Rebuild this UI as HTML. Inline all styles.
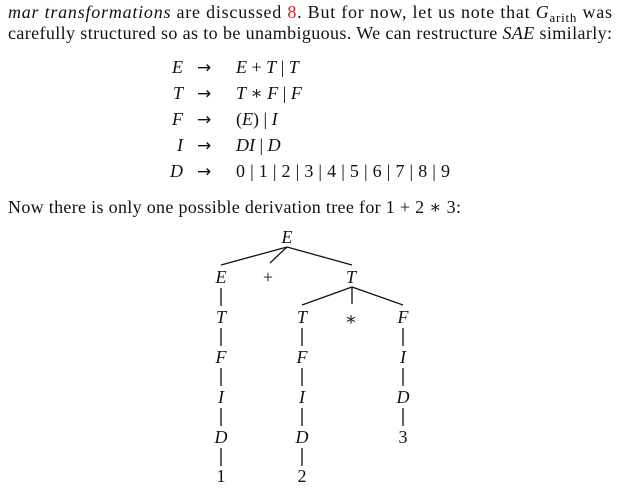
<!DOCTYPE html>
<html><head><meta charset="utf-8"><style>
html,body{margin:0;padding:0;background:#fff;}
svg{display:block;}
text{font-family:"Liberation Serif","DejaVu Serif",serif;font-size:18px;fill:#111;}
.i{font-style:italic;}
.r{fill:#e0191a;}
.a{font-family:"DejaVu Sans",sans-serif;font-size:17px;}
line{stroke:#111;stroke-width:1.3;}
</style></head><body>
<svg width="619" height="494" xmlns="http://www.w3.org/2000/svg">
<text x="8" y="18" textLength="604" lengthAdjust="spacing"><tspan class="i">mar transformations</tspan> are discussed <tspan class="r">8</tspan>. But for now, let us note that <tspan class="i">G</tspan><tspan font-size="13" dy="4">arith</tspan><tspan dy="-4"> was</tspan></text>
<text x="8" y="39" textLength="604" lengthAdjust="spacing">carefully structured so as to be unambiguous. We can restructure <tspan class="i">SAE</tspan> similarly:</text>

<g>
<text x="183" y="73" text-anchor="end" class="i">E</text><text x="197" y="73" class="a">→</text><text x="236" y="73"><tspan class="i">E</tspan> + <tspan class="i">T</tspan>  |  <tspan class="i">T</tspan></text>
<text x="183" y="99" text-anchor="end" class="i">T</text><text x="197" y="99" class="a">→</text><text x="236" y="99"><tspan class="i">T</tspan> ∗ <tspan class="i">F</tspan>  |  <tspan class="i">F</tspan></text>
<text x="183" y="125" text-anchor="end" class="i">F</text><text x="197" y="125" class="a">→</text><text x="236" y="125">(<tspan class="i">E</tspan>)  |  <tspan class="i">I</tspan></text>
<text x="183" y="151" text-anchor="end" class="i">I</text><text x="197" y="151" class="a">→</text><text x="236" y="151"><tspan class="i">DI</tspan> | <tspan class="i">D</tspan></text>
<text x="183" y="177" text-anchor="end" class="i">D</text><text x="197" y="177" class="a">→</text><text x="236" y="177" textLength="214" lengthAdjust="spacing">0 | 1 | 2 | 3 | 4 | 5 | 6 | 7 | 8 | 9</text>
</g>

<text x="8" y="213" textLength="453" lengthAdjust="spacing">Now there is only one possible derivation tree for 1 + 2 ∗ 3:</text>

<g text-anchor="middle">
<text x="287" y="243" class="i">E</text>
<text x="221" y="283" class="i">E</text><text x="268" y="283">+</text><text x="351" y="283" class="i">T</text>
<text x="221" y="323" class="i">T</text><text x="302" y="323" class="i">T</text><text x="351" y="325">∗</text><text x="403" y="323" class="i">F</text>
<text x="221" y="363" class="i">F</text><text x="302" y="363" class="i">F</text><text x="403" y="363" class="i">I</text>
<text x="221" y="403" class="i">I</text><text x="302" y="403" class="i">I</text><text x="403" y="403" class="i">D</text>
<text x="221" y="443" class="i">D</text><text x="302" y="443" class="i">D</text><text x="403" y="443">3</text>
<text x="221" y="482">1</text><text x="302" y="482">2</text>
</g>
<g>
<line x1="287" y1="247" x2="221" y2="265"/>
<line x1="287" y1="247" x2="270" y2="263"/>
<line x1="287" y1="247" x2="352" y2="265"/>
<line x1="352" y1="287" x2="302" y2="305"/>
<line x1="352" y1="287" x2="352" y2="304"/>
<line x1="352" y1="287" x2="403" y2="305"/>
<line x1="221" y1="288" x2="221" y2="306"/>
<line x1="221" y1="328" x2="221" y2="346"/>
<line x1="221" y1="368" x2="221" y2="386"/>
<line x1="221" y1="408" x2="221" y2="426"/>
<line x1="221" y1="448" x2="221" y2="466"/>
<line x1="302" y1="328" x2="302" y2="346"/>
<line x1="302" y1="368" x2="302" y2="386"/>
<line x1="302" y1="408" x2="302" y2="426"/>
<line x1="302" y1="448" x2="302" y2="466"/>
<line x1="403" y1="328" x2="403" y2="346"/>
<line x1="403" y1="368" x2="403" y2="386"/>
<line x1="403" y1="408" x2="403" y2="426"/>
</g>
</svg>
</body></html>
